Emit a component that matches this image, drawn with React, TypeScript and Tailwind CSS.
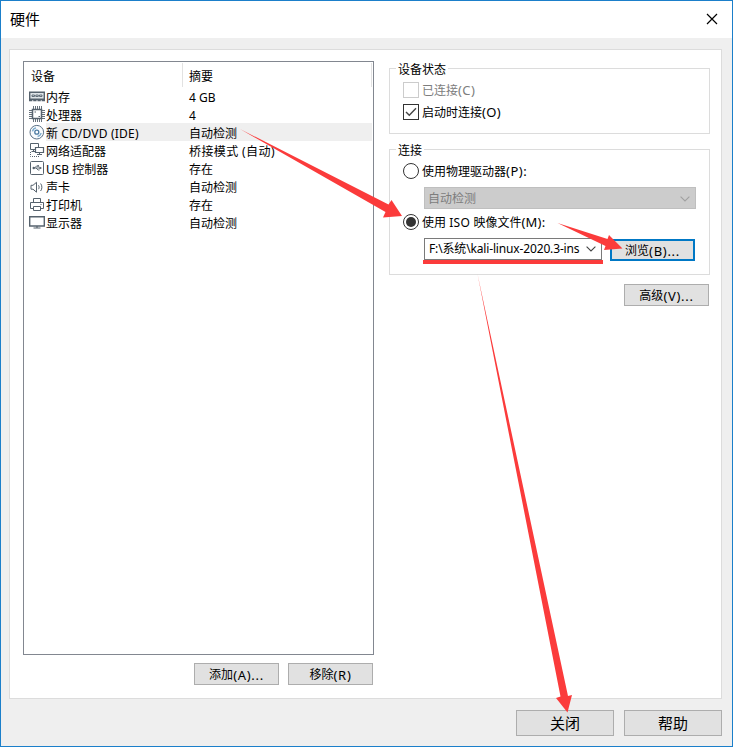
import type { ReactNode } from "react";

const stroke = "#56626d";

function MemoryIcon() {
  return (
    <svg width="16" height="16" viewBox="0 0 16 16" fill="none" stroke={stroke}>
      <path d="M.7 4.200h14.600v7H.7z" fill="#dfe4e8" strokeWidth="1.400" />
      <path d="M3 7h2.500v1.500H3zM6.800 7h2.500v1.500H6.800zM10.500 7H13v1.500h-2.500z" strokeWidth=".9" />
      <path d="M0 12.500h16" strokeWidth="1.600" strokeDasharray="3.400 .8" />
    </svg>
  );
}

function CpuIcon() {
  return (
    <svg width="16" height="16" viewBox="0 0 16 16" fill="none" stroke={stroke}>
      <path d="M3.500 3.500h9v9h-9z" strokeWidth="1.500" fill="#fff" />
      <path d="M4.500 0v3M6.500 0v3M8.500 0v3M10.500 0v3M12.500 0v3M4.500 13v3M6.500 13v3M8.500 13v3M10.500 13v3M12.500 13v3M0 4.500h3M0 6.500h3M0 8.500h3M0 10.500h3M0 12.500h3M13 4.500h3M13 6.500h3M13 8.500h3M13 10.500h3M13 12.500h3" strokeWidth=".9" />
      <path d="M5.500 6H7M9.500 10.500H11" />
    </svg>
  );
}

function DiscIcon() {
  return (
    <svg width="16" height="16" viewBox="0 0 16 16" fill="none" stroke="#5b7186">
      <circle cx="7.800" cy="8.200" r="6.800" fill="#f8fbfd" />
      <circle cx="7.800" cy="8.200" r="2" fill="#fff" stroke="#4d7ca3" strokeWidth="1.300" />
      <path d="M3.500 7.400a4.400 4.400 0 0 1 3.500-3.500M12.100 9a4.400 4.400 0 0 1-3.500 3.500" stroke="#79a9cc" strokeWidth="1.300" />
    </svg>
  );
}

function NetworkIcon() {
  return (
    <svg width="16" height="16" viewBox="0 0 16 16" fill="none" stroke={stroke}>
      <path d="M1.500 1.500h8v6h-8z" fill="#fff" />
      <path d="M2.500 9.500h4M4.500 7.500v2" />
      <path d="M6.500 5.500h8v5h-8z" fill="#fff" strokeWidth="1.200" />
      <path d="M10.500 10.500v2M8 12.500h5" />
      <path d="M1.500 10v4.500H10" strokeDasharray="1 1" />
    </svg>
  );
}

function UsbIcon() {
  return (
    <svg width="16" height="16" viewBox="0 0 16 16" fill="none" stroke={stroke}>
      <rect x="1.500" y="1.500" width="13" height="13" rx="1" />
      <path d="M4 8h8M5.500 8l2-2H9M7 8l2 2h1.500" strokeWidth=".9" />
      <circle cx="4.700" cy="8" r="1.200" fill={stroke} stroke="none" />
      <path d="M10.500 6.500 13 8l-2.500 1.500z" fill={stroke} stroke="none" />
      <circle cx="9.200" cy="5.900" r=".9" fill={stroke} stroke="none" />
    </svg>
  );
}

function SoundIcon() {
  return (
    <svg width="16" height="16" viewBox="0 0 16 16" fill="none" stroke={stroke}>
      <path d="M2 7.300v3.900h2l3.500 3V4.300L4 7.300z" />
      <path d="M9.500 7.300c.8 1.200.8 2.700 0 3.900M11.600 5.500c1.700 2 1.700 5.500 0 7.500" />
    </svg>
  );
}

function PrinterIcon() {
  return (
    <svg width="16" height="16" viewBox="0 0 16 16" fill="none" stroke={stroke}>
      <path d="M4.500 6.500v-4h7v4" />
      <path d="M4 12.500H1.500v-6h13v6H12" />
      <path d="M4.500 10.500h7v4h-7z" fill="#fff" />
      <path d="M11.500 8.500h1" />
    </svg>
  );
}

function DisplayIcon() {
  return (
    <svg width="16" height="16" viewBox="0 0 16 16" fill="none" stroke={stroke}>
      <path d="M.7 2.700h14.600v9.300H.7z" strokeWidth="1.400" />
      <path d="M8 12v2M4.500 14h7" strokeWidth="1.200" />
    </svg>
  );
}

function ChevronDown({ color }: { color: string }) {
  return (
    <svg width="10" height="6" viewBox="0 0 10 6" fill="none" stroke={color} strokeWidth="1.100">
      <path d="M.6.6 5 5 9.400.6" />
    </svg>
  );
}

const devices: { icon: ReactNode; name: ReactNode; summary: ReactNode }[] = [
  { icon: <MemoryIcon />, name: "内存", summary: "4 GB" },
  { icon: <CpuIcon />, name: "处理器", summary: "4" },
  { icon: <DiscIcon />, name: <>新 <span className="tracking-[0.2px]">CD/DVD (IDE)</span></>, summary: "自动检测" },
  { icon: <NetworkIcon />, name: "网络适配器", summary: "桥接模式 (自动)" },
  { icon: <UsbIcon />, name: "USB 控制器", summary: "存在" },
  { icon: <SoundIcon />, name: "声卡", summary: "自动检测" },
  { icon: <PrinterIcon />, name: "打印机", summary: "存在" },
  { icon: <DisplayIcon />, name: "显示器", summary: "自动检测" },
];

function Button({ children, className }: { children: ReactNode; className: string }) {
  return (
    <button className={`flex items-center justify-center whitespace-nowrap bg-[#e1e1e1] ${className}`}>
      {children}
    </button>
  );
}

function Key({ children }: { children: string }) {
  return <span className="text-[13px] tracking-[0.7px]">{children}</span>;
}

function DeviceList() {
  return (
    <div className="h-[594px] w-[351px] border border-[#828790] bg-white">
      <div className="flex h-[25px] pt-px">
        <div className="flex w-[159px] items-center border-r border-[#e2e2e2] pl-[7px] pt-1">设备</div>
        <div className="flex w-[189px] items-center border-r border-[#e2e2e2] pl-[6px] pt-1">摘要</div>
      </div>
      {devices.map((d, i) => (
        <div key={i} className="flex h-[18px] items-center whitespace-nowrap pl-[5px]">
          <span className="w-[17px]">{d.icon}</span>
          <span className={`flex h-[18px] w-[326px] items-center pt-[3px] ${i === 2 ? "bg-[#efefef]" : ""}`}>
            <span className="w-[119px]">{d.name}</span>
            <span className={i === 3 ? "pl-[24px] tracking-[0.4px]" : "pl-[24px]"}>{d.summary}</span>
          </span>
        </div>
      ))}
    </div>
  );
}

function Group({ title, className, children }: { title: string; className: string; children: ReactNode }) {
  return (
    <section className={`w-[321px] border border-[#dcdcdc] ${className}`}>
      <h2 className="-mt-2 ml-[6px] h-4 w-fit bg-white px-[2px] leading-[18px]">{title}</h2>
      {children}
    </section>
  );
}

export default function App() {
  return (
    <main className="relative flex h-[747px] w-[733px] flex-col border border-[#1b7fca] bg-[#efefef] font-['Noto_Sans','Noto_Sans_CJK_SC',sans-serif] text-[12px] leading-[18px] text-black">
      <header className="flex h-[37px] shrink-0 items-center justify-between bg-white pl-[9px] pr-[14px] text-[15px]">
        <h1 className="-mt-0.5">硬件</h1>
        <svg className="-mt-px" width="12" height="12" viewBox="0 0 12 12" stroke="#000" strokeWidth="1.200">
          <path d="m1 1 10 10m0-10-10 10" />
        </svg>
      </header>

      <div className="ml-2 mt-[11px] flex h-[650px] w-[713px] shrink-0 border border-[#dcdcdc] bg-white pl-[13px] pt-[11px]">
        <div className="w-[351px]">
          <DeviceList />
          <div className="mt-2 flex justify-end gap-[9px] pr-px">
            <Button className="h-[22px] w-[85px] border border-[#adadad] pt-px">添加<Key>(A)...</Key></Button>
            <Button className="h-[22px] w-[85px] border border-[#adadad] pt-px">移除<Key>(R)</Key></Button>
          </div>
        </div>

        <div className="ml-[15px] mt-[7px] w-[321px]">
          <Group title="设备状态" className="h-[66px]">
            <label className="ml-[13px] mt-[5px] flex h-4 items-center gap-[3px] text-[#7d7d7d]">
              <span className="h-4 w-4 border border-[#cccccc]" />
              <span>已连接<span className="text-[13px] tracking-[0.4px]">(C)</span></span>
            </label>
            <label className="ml-[13px] mt-[6px] flex h-4 items-center gap-[3px]">
              <span className="flex h-4 w-4 items-center justify-center border border-[#333333]">
                <svg width="12" height="10" viewBox="0 0 12 10" fill="none" stroke="#444" strokeWidth="1.400">
                  <path d="M1 5 4.300 8.300 11 1.300" />
                </svg>
              </span>
              <span>启动时连接<span className="text-[13px] tracking-[0.3px]">(O)</span></span>
            </label>
          </Group>

          <Group title="连接" className="mt-[15px] h-[126px]">
            <label className="ml-[13px] mt-[5px] flex h-4 items-center gap-[3px]">
              <span className="h-4 w-4 rounded-full border border-[#333333]" />
              <span>使用物理驱动器<span className="text-[13px] tracking-[0.5px]">(P):</span></span>
            </label>
            <div className="ml-[34px] mt-[8px] flex h-[22px] w-[272px] items-center justify-between border border-[#bfbfbf] bg-[#cccccc] pl-[3px] pr-[5px] pt-px text-[#7d7d7d]">
              自动检测
              <ChevronDown color="#a0a0a0" />
            </div>
            <label className="ml-[13px] mt-[5px] flex h-4 items-center gap-[3px]">
              <span className="flex h-4 w-4 items-center justify-center rounded-full border border-[#333333]">
                <span className="h-[10px] w-[10px] rounded-full bg-[#333333]" />
              </span>
              <span>使用 <span className="tracking-[0.3px]">ISO </span>映像文件<span className="text-[13px] tracking-[0.2px]">(M):</span></span>
            </label>
            <div className="ml-[34px] mt-2 flex">
              <div className="flex h-[22px] w-[178px] items-center justify-between border border-[#7a7a7a] bg-white pl-1 pr-[5px]">
                <span className="whitespace-nowrap tracking-[-0.15px]">F:\系统\kali-linux-2020.3-ins</span>
                <ChevronDown color="#444" />
              </div>
              <Button className="ml-2 mt-px h-[22px] w-[85px] border-2 border-[#0078c5] pt-px">浏览<Key>(B)...</Key></Button>
            </div>
          </Group>
          <Button className="ml-auto mr-px mt-[9px] h-[22px] w-[85px] border border-[#adadad] pt-px">高级<Key>(V)...</Key></Button>
        </div>
      </div>

      <footer className="mt-[11px] flex justify-end gap-[10px] pr-[10px] text-[15px]">
        <Button className="h-[26px] w-[98px] border border-[#adadad]">关闭</Button>
        <Button className="h-[26px] w-[98px] border border-[#adadad]">帮助</Button>
      </footer>

      <svg className="pointer-events-none absolute -left-px -top-px" width="733" height="747" viewBox="0 0 733 747" fill="#fb3b3b">
        <path d="M240 129 388.500 204.500l3-4.500L402 216l-19 1.500 2.500-5.500z" />
        <path d="M557.500 223 607.500 239l1.500-4 13.500 13.500L604 250l1.500-4z" />
        <path d="M477.500 274 568 696l4-1-4.500 17.500L556 698l4.500-1.500z" />
        <path d="M423 260h180v4H423z" />
      </svg>
    </main>
  );
}
